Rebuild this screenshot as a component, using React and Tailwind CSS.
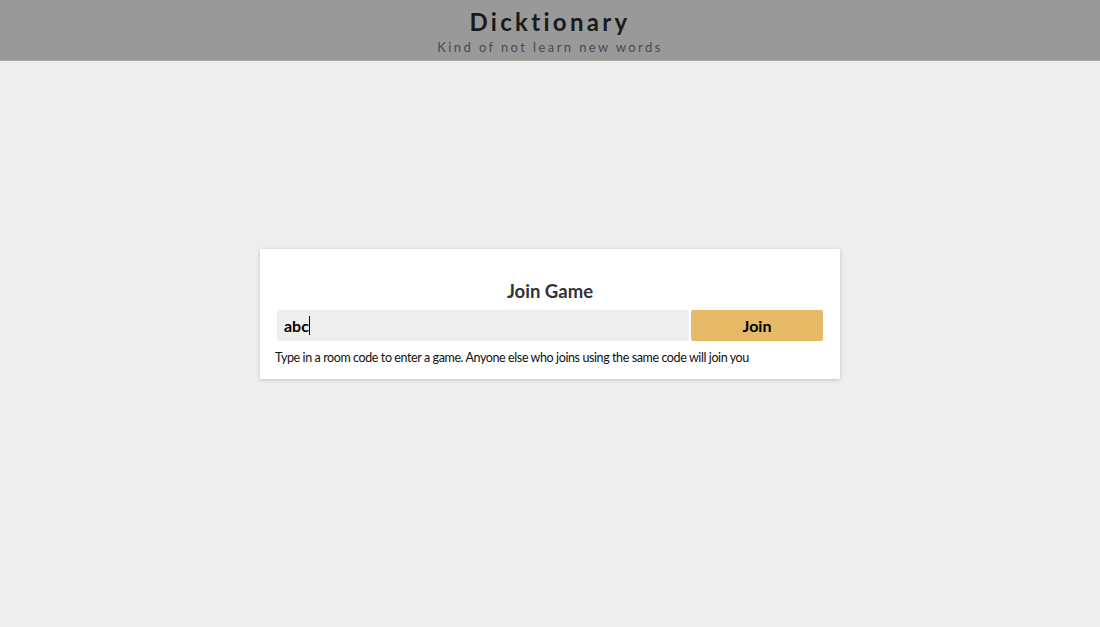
import React from "react";

export default function App() {
  return (
    <div className="min-h-[627px] bg-[#eeeeee] flex flex-col" style={{ fontFamily: 'Lato, "Open Sans", sans-serif' }}>
      <header className="h-[61px] bg-[#999999] border-b border-[#a8a8a8] flex flex-col items-center">
        <h1 className="mt-[7px] text-[24px] leading-[30px] font-bold tracking-[3.3px] text-[#1a1a1a]">Dicktionary</h1>
        <p className="mt-[2px] text-[13px] leading-[16px] tracking-[2.4px] text-[#4a4a4a]">Kind of not learn new words</p>
      </header>
      <main className="flex justify-center pt-[188px]">
        <div className="w-[580px] h-[130px] bg-white shadow-[0_1px_4px_rgba(0,0,0,0.18)] px-[17px] pt-[28px]">
          <h2 className="text-center text-[18.5px] leading-[28px] font-bold text-[#333333]">Join Game</h2>
          <div className="mt-[5px] flex gap-[2px] h-[31px]">
            <div className="flex-1 bg-[#eeeeee] rounded-[2px] flex items-center pl-[7px]">
              <span className="text-[16px] font-bold text-black">abc</span>
              <span className="w-px h-[19px] bg-black"></span>
            </div>
            <button className="w-[132px] bg-[#e5b966] rounded-[2px] text-[16px] font-bold text-black">Join</button>
          </div>
          <p className="mt-[9px] -ml-[2px] text-[12.5px] leading-[16px] tracking-[-0.4px] text-[#111111]">Type in a room code to enter a game. Anyone else who joins using the same code will join you</p>
        </div>
      </main>
    </div>
  );
}
